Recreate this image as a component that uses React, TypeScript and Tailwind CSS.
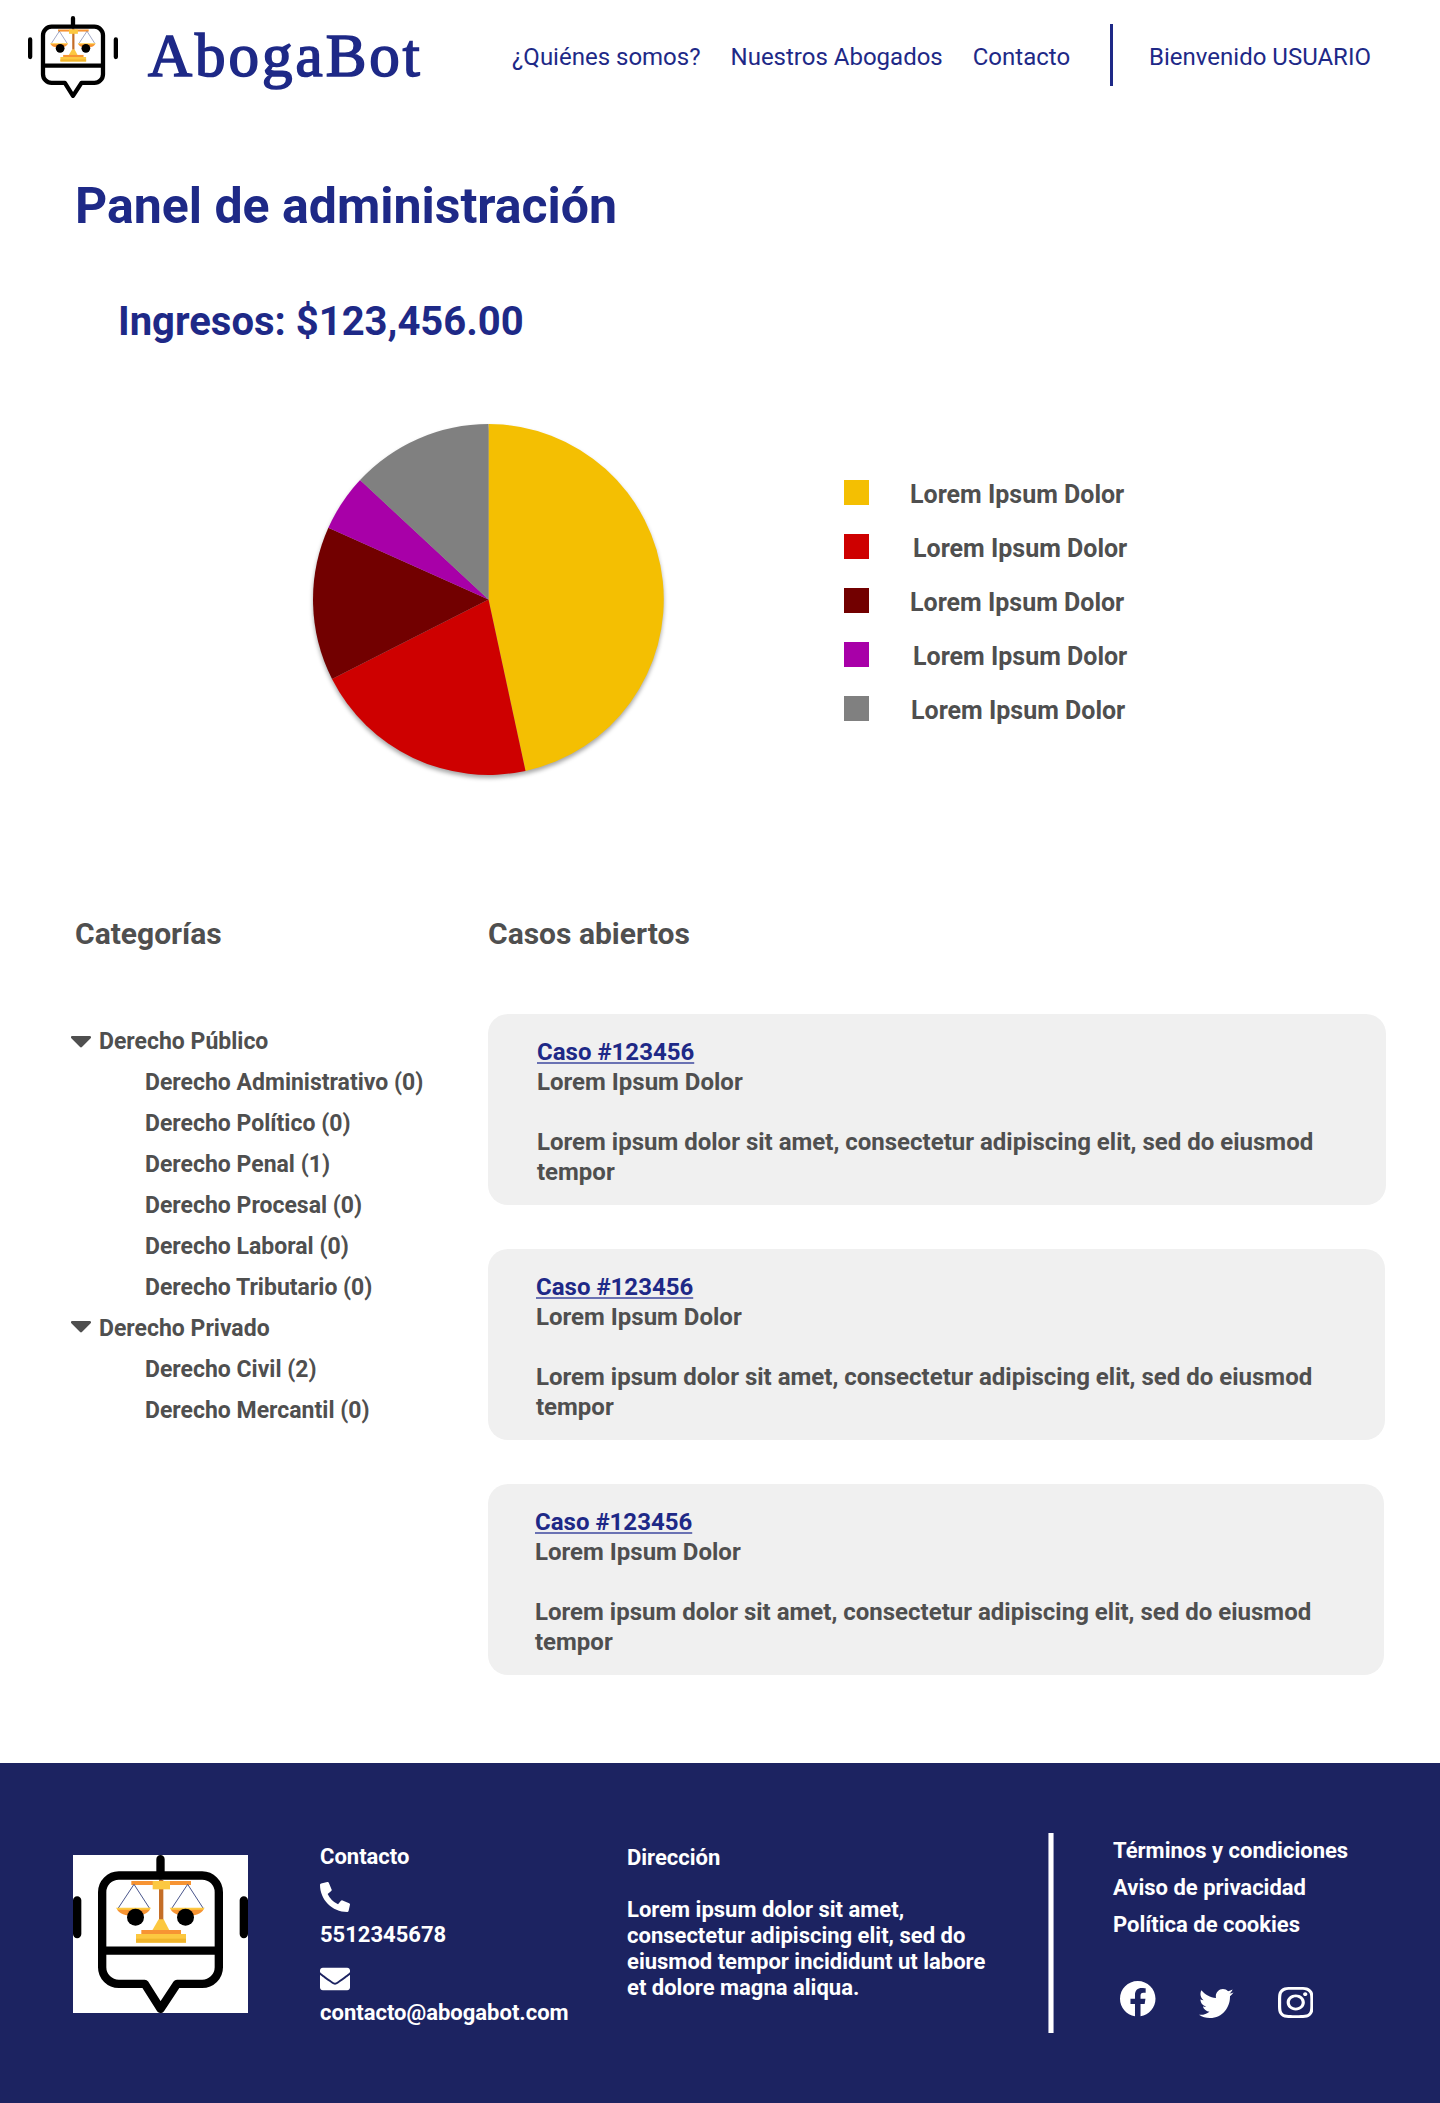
import { FaCaretDown, FaEnvelope, FaFacebook, FaInstagram, FaPhoneAlt, FaTwitter } from "react-icons/fa";

function BotLogo({ className }: { className: string }) {
  return (
    <svg viewBox="0 0 525 474" preserveAspectRatio="none" className={className} aria-label="AbogaBot">
      <rect width="525" height="474" fill="#fff" />
      <rect x="258" y="75" width="13" height="120" fill="#c46e28" />
      <rect x="175" y="78" width="179" height="12" fill="#f79433" />
      <rect x="239" y="78" width="52" height="25" fill="#fcc840" />
      {[0, 161].map((dx) => (
        <g key={dx} transform={`translate(${dx} 0)`}>
          <path d="M136 159 183 88 229 159" fill="none" stroke="#4a568c" strokeWidth="3" />
          <path d="M132 162H231C222 190 141 190 132 162Z" fill="#f79433" />
          <path d="M129 158H234L230 164H133Z" fill="#fcc840" />
        </g>
      ))}
      <path d="M257 193H272L289 226H238Z" fill="#fcc840" />
      <rect x="205" y="225" width="119" height="12" fill="#f79433" />
      <rect x="189" y="237" width="150" height="26" fill="#fcc840" />
      <rect x="189" y="251" width="150" height="12" fill="#efb42c" />
      <circle cx="187.5" cy="187" r="25.5" />
      <circle cx="337.5" cy="187" r="25.5" />
      <g fill="none" stroke="#000" strokeWidth="25" strokeLinecap="round" strokeLinejoin="round">
        <path d="M262.5 12.5V61M12.5 136V237M512.5 136V237M88 287H437" />
        <path d="M137.5 61.5H387.5A50 50 0 0 1 437.5 111.5V336.5A50 50 0 0 1 387.5 386.5H312L262.5 461.5 215 386.5H137.5A50 50 0 0 1 87.5 336.5V111.5A50 50 0 0 1 137.5 61.5Z" />
      </g>
    </svg>
  );
}

function PieChart() {
  return (
    <svg viewBox="-526 -526 1052 1052" className="mt-[0.5px] h-[351px] w-[351px] overflow-visible drop-shadow-[0_3px_2px_rgba(0,0,0,0.35)]">
      <path d="M0-526A526 526 0 0 1 111 514L0 0Z" fill="#f4bf02" />
      <path d="M0 0 111 514A526 526 0 0 1-469 238Z" fill="#ce0000" />
      <path d="M0 0-469 238A526 526 0 0 1-480-215Z" fill="#720000" />
      <path d="M0 0-480-215A526 526 0 0 1-385-358Z" fill="#a800a8" />
      <path d="M0 0-385-358A526 526 0 0 1 0-526Z" fill="#808080" />
    </svg>
  );
}

const legend = [
  { color: "bg-[#f4bf02]", gap: "ml-[41px]" },
  { color: "bg-[#ce0000]", gap: "ml-11" },
  { color: "bg-[#720000]", gap: "ml-[41px]" },
  { color: "bg-[#a800a8]", gap: "ml-11" },
  { color: "bg-[#808080]", gap: "ml-[42px]" },
];

const categories = [
  {
    name: "Derecho Público",
    caret: "mt-[15px]",
    items: [
      "Derecho Administrativo (0)",
      "Derecho Político (0)",
      "Derecho Penal (1)",
      "Derecho Procesal (0)",
      "Derecho Laboral (0)",
      "Derecho Tributario (0)",
    ],
  },
  { name: "Derecho Privado", caret: "mt-[13px]", items: ["Derecho Civil (2)", "Derecho Mercantil (0)"] },
];

const cases = ["w-[898px] pl-[49px]", "w-[897px] pl-12", "w-[896px] pl-[47px]"];

export default function App() {
  return (
    <div className="flex h-[2103px] w-[1440px] flex-col overflow-hidden bg-white font-['Roboto',sans-serif] font-bold text-[#4f4f4f]">
      <header className="flex h-[114px] shrink-0 items-start font-normal text-[#1e2987]">
        <BotLogo className="mt-4 ml-7 h-[82px] w-[90px] shrink-0" />
        <span className="mt-[21px] ml-[30px] w-[364px] shrink-0 font-['Liberation_Serif',serif] text-[61px] leading-[70px] tracking-[3px] [-webkit-text-stroke:1.7px_#1e2987]">
          AbogaBot
        </span>
        <nav className="mt-[43px] flex gap-[30px] text-2xl leading-7 whitespace-nowrap">
          <a>¿Quiénes somos?</a>
          <a>Nuestros Abogados</a>
          <a>Contacto</a>
        </nav>
        <div className="mt-6 ml-[39.5px] h-[62px] w-[3px] bg-[#1e2987]" />
        <span className="mt-[43px] ml-[36.5px] text-2xl leading-7 whitespace-nowrap">Bienvenido USUARIO</span>
      </header>

      <main className="flex flex-col">
        <h1 className="mt-[63px] ml-[75px] text-[50px] leading-[58px] text-[#1e2987]">Panel de administración</h1>
        <h2 className="mt-[63px] ml-[118px] text-[40px] leading-[47px] text-[#1e2987]">Ingresos: $123,456.00</h2>

        <section className="mt-[78px] ml-[313px] flex h-[352px]">
          <PieChart />
          <ul className="mt-[57px] ml-[180px] flex flex-col gap-[29px]">
            {legend.map((l) => (
              <li key={l.color} className="flex h-[25px] items-start text-[25px] leading-[29px]">
                <span className={`h-[25px] w-[25px] ${l.color}`} />
                <span className={l.gap}>Lorem Ipsum Dolor</span>
              </li>
            ))}
          </ul>
        </section>

        <div className="mt-[141px] flex">
          <section className="w-[488px] shrink-0">
            <h3 className="ml-[75px] text-[30px] leading-[35px]">Categorías</h3>
            <div className="mt-[70px] ml-[71px] text-[23px] leading-[41px]">
              {categories.map((c) => (
                <div key={c.name}>
                  <div className="flex items-start">
                    <FaCaretDown viewBox="12 192 296 169" preserveAspectRatio="none" className={`h-[11.5px] w-5 ${c.caret}`} />
                    <span className="ml-2">{c.name}</span>
                  </div>
                  <ul className="ml-[74px]">
                    {c.items.map((i) => (
                      <li key={i}>{i}</li>
                    ))}
                  </ul>
                </div>
              ))}
            </div>
          </section>
          <section>
            <h3 className="text-[30px] leading-[35px]">Casos abiertos</h3>
            <div className="mt-[63px] flex flex-col gap-11">
              {cases.map((size) => (
                <article key={size} className={`h-[191px] rounded-[20px] bg-[#f0f0f0] pt-[23px] pr-10 text-2xl leading-[30px] ${size}`}>
                  <a className="block text-[#1e2987] underline decoration-[#6a72b3] decoration-2 underline-offset-2">Caso #123456</a>
                  <p>Lorem Ipsum Dolor</p>
                  <p className="mt-[30px]">Lorem ipsum dolor sit amet, consectetur adipiscing elit, sed do eiusmod tempor</p>
                </article>
              ))}
            </div>
          </section>
        </div>
      </main>

      <footer className="mt-[88px] flex h-[340px] shrink-0 items-start bg-[#1c2361] text-[22px] leading-[25px] text-white">
        <BotLogo className="mt-[92px] ml-[73px] h-[158px] w-[175px] shrink-0" />
        <div className="mt-[81px] ml-[72px] flex w-[307px] flex-col">
          <span>Contacto</span>
          <FaPhoneAlt size={30} className="mt-[13px]" />
          <span className="mt-2.5">5512345678</span>
          <FaEnvelope size={30} className="mt-[17px]" />
          <span className="mt-1.5">contacto@abogabot.com</span>
        </div>
        <div className="mt-[82px] w-[370px]">
          <span className="block">Dirección</span>
          <p className="mt-[27px] leading-[26px]">
            Lorem ipsum dolor sit amet, consectetur adipiscing elit, sed do eiusmod tempor incididunt ut labore et dolore magna aliqua.
          </p>
        </div>
        <div className="mt-[70px] ml-[51px] h-[200px] w-1.5 border-x border-[#9a9dbd] bg-white" />
        <div className="mt-[75px] ml-[59px]">
          <ul className="flex flex-col gap-3">
            <li>Términos y condiciones</li>
            <li>Aviso de privacidad</li>
            <li>Política de cookies</li>
          </ul>
          <div className="mt-11 ml-[7px] flex items-start">
            <FaFacebook viewBox="8 8 496 496" className="h-[35.5px] w-[35.5px]" />
            <FaTwitter viewBox="0 48 512 416" preserveAspectRatio="none" className="mt-[7.5px] ml-[43.5px] h-[29px] w-[34.5px]" />
            <FaInstagram viewBox="0 32 448 448" preserveAspectRatio="none" className="mt-1.5 ml-11 h-[31px] w-[35.5px]" />
          </div>
        </div>
      </footer>
    </div>
  );
}
